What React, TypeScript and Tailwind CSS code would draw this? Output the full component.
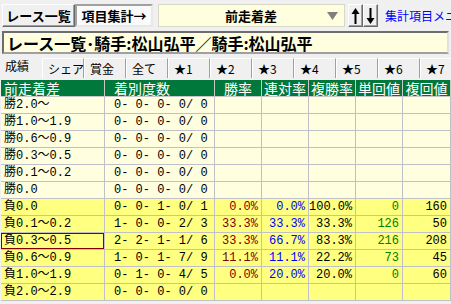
import React from 'react';

type Row = {
  label: string;
  record: string;
  win?: string;
  ren?: string;
  fuku?: string;
  tan?: string;
  fukuVal?: string;
  lose?: boolean;
  selected?: boolean;
};

const rows: Row[] = [
  { label: '勝2.0～', record: '0- 0- 0- 0/ 0' },
  { label: '勝1.0～1.9', record: '0- 0- 0- 0/ 0' },
  { label: '勝0.6～0.9', record: '0- 0- 0- 0/ 0' },
  { label: '勝0.3～0.5', record: '0- 0- 0- 0/ 0' },
  { label: '勝0.1～0.2', record: '0- 0- 0- 0/ 0' },
  { label: '勝0.0', record: '0- 0- 0- 0/ 0' },
  { label: '負0.0', record: '0- 0- 1- 0/ 1', win: '0.0%', ren: '0.0%', fuku: '100.0%', tan: '0', fukuVal: '160', lose: true },
  { label: '負0.1～0.2', record: '1- 0- 0- 2/ 3', win: '33.3%', ren: '33.3%', fuku: '33.3%', tan: '126', fukuVal: '50', lose: true },
  { label: '負0.3～0.5', record: '2- 2- 1- 1/ 6', win: '33.3%', ren: '66.7%', fuku: '83.3%', tan: '216', fukuVal: '208', lose: true, selected: true },
  { label: '負0.6～0.9', record: '1- 0- 1- 7/ 9', win: '11.1%', ren: '11.1%', fuku: '22.2%', tan: '73', fukuVal: '45', lose: true },
  { label: '負1.0～1.9', record: '0- 1- 0- 4/ 5', win: '0.0%', ren: '20.0%', fuku: '20.0%', tan: '0', fukuVal: '60', lose: true },
  { label: '負2.0～2.9', record: '0- 0- 0- 0/ 0', lose: true },
];

const tabs = ['シェア', '賞金', '全て', '★1', '★2', '★3', '★4', '★5', '★6', '★7'];

const headers = ['勝率', '連対率', '複勝率', '単回値', '複回値'];

const cols = 'grid grid-cols-[104px_110px_47px_47px_47px_47px_48px]';
const cell = 'border-r border-b border-[#c0c0c8]';
const raised =
  'border border-t-white border-l-white border-b-[#696969] border-r-[#696969] shadow-[inset_-1px_-1px_0_#a0a0a0] bg-[#f0f0f0]';

const Arrow = ({ down }: { down?: boolean }) => (
  <svg width="9" height="16" viewBox="0 0 9 16" className={down ? 'rotate-180' : ''}>
    <polygon points="4.5,0 8.5,6 0.5,6" fill="#000" />
    <rect x="3.5" y="4" width="2" height="12" fill="#000" />
  </svg>
);

export default function App() {
  return (
    <div className="w-[451px] h-[304px] bg-[#f0f0f0] overflow-hidden font-['Noto_Sans_CJK_JP',sans-serif] text-black">
      {/* top toolbar */}
      <div className="flex items-start h-[31px] pt-[4px] pl-[2px]">
        <div className={`shrink-0 w-[73px] h-[23px] flex items-center justify-center text-[13px] font-bold leading-none ${raised}`}>
          レース一覧
        </div>
        <div className="shrink-0 w-[78px] h-[23px] flex items-center justify-center text-[13px] font-bold leading-none bg-[#fafafa] border-2 border-t-[#a0a0a0] border-l-[#a0a0a0] border-b-[#e8e8e8] border-r-[#e8e8e8]">
          項目集計→
        </div>
        <div className="shrink-0 ml-[5px] w-[187px] h-[23px] flex items-center bg-[#ffffe0] border border-[#d8d8c8]">
          <span className="ml-[66px] text-[13px] font-bold leading-none">前走着差</span>
          <svg width="11" height="8" viewBox="0 0 11 8" className="ml-auto mr-[6px]">
            <polygon points="0,0 11,0 5.5,8" fill="#808080" />
          </svg>
        </div>
        <div className={`shrink-0 ml-[3px] w-[15px] h-[23px] flex items-center justify-center ${raised}`}>
          <Arrow />
        </div>
        <div className={`shrink-0 w-[15px] h-[23px] flex items-center justify-center ${raised}`}>
          <Arrow down />
        </div>
        <div className="shrink-0 ml-[7px] h-[23px] flex items-center text-[12px] leading-none text-[#0000ff] whitespace-nowrap">
          集計項目メニュー
        </div>
      </div>

      {/* title */}
      <div className="mx-[2px] h-[23px] flex items-center bg-[#ffffe0] border-2 border-t-[#6d6d6d] border-l-[#6d6d6d] border-b-[#a0a0a0] border-r-[#e0e0e0] pl-[3px] text-[16px] font-bold leading-none whitespace-nowrap">
        レース一覧･騎手:松山弘平／騎手:松山弘平
      </div>

      {/* tabs */}
      <div className="flex h-[26px] pt-[1px] text-[12px] leading-none whitespace-nowrap">
        <div className="w-[42px] shrink-0 pt-[5px] pl-[5px]">成績</div>
        {tabs.map((t) => (
          <div
            key={t}
            className="w-[42px] shrink-0 mt-[3px] h-[20px] pl-[5px] pt-[4px] border-l border-t border-l-white border-t-white border-r border-r-[#a0a0a0]"
          >
            {t}
          </div>
        ))}
      </div>

      {/* table */}
      <div className="ml-[1px]">
        <div className={`${cols} h-[17px] bg-[#00783c] text-white text-[14px] leading-[16px]`}>
          <div className="border-r border-b border-[#c8c8c8] pl-[3px]">前走着差</div>
          <div className="border-r border-b border-[#c8c8c8] pl-[9px]">着別度数</div>
          {headers.map((h) => (
            <div key={h} className="border-r border-b border-[#c8c8c8] text-center">
              {h}
            </div>
          ))}
        </div>
        {rows.map((r) => (
          <div
            key={r.label}
            className={`${cols} h-[17px] text-[12px] leading-[16px] font-['Liberation_Mono','Noto_Sans_CJK_JP',monospace] whitespace-pre ${
              r.lose ? 'bg-[#ffff80]' : 'bg-[#ffffe0]'
            }`}
          >
            <div className={`${cell} pl-[3px] ${r.selected ? 'shadow-[inset_0_0_0_1px_#800000]' : ''}`}>{r.label}</div>
            <div className={`${cell} pl-[9px]`}>{r.record}</div>
            <div className={`${cell} text-right pr-[3px] text-[#800000]`}>{r.win}</div>
            <div className={`${cell} text-right pr-[3px] text-[#0000ff]`}>{r.ren}</div>
            <div className={`${cell} text-right pr-[3px]`}>{r.fuku}</div>
            <div className={`${cell} text-right pr-[3px] text-[#008000]`}>{r.tan}</div>
            <div className={`${cell} text-right pr-[3px]`}>{r.fukuVal}</div>
          </div>
        ))}
      </div>
    </div>
  );
}
